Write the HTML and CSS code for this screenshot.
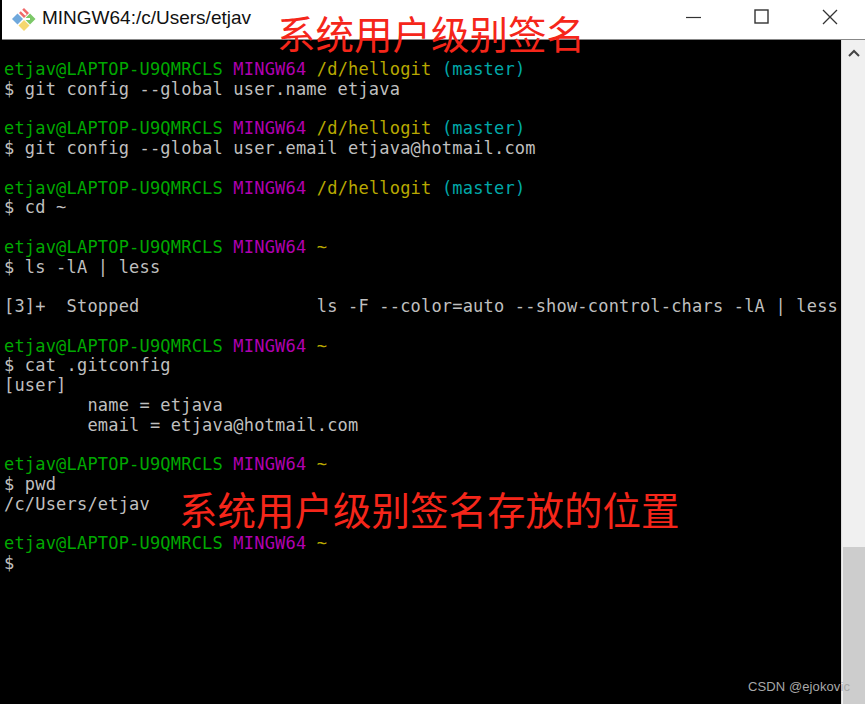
FILE: index.html
```html
<!DOCTYPE html>
<html lang="zh">
<head>
<meta charset="utf-8">
<title>MINGW64</title>
<link rel="stylesheet" href="styles.css">
</head>
<body>
<div class="window">
  <header class="titlebar">
    <svg class="logo" width="26" height="26" viewBox="0 0 26 26">
      <path d="M13 2 L8 7 L13 12 L18 7Z" fill="#f0696a"/>
      <path d="M1 13 L6.5 7.5 L12 13 L6.5 18.5Z" fill="#6fa8dc"/>
      <path d="M13.5 13 L19 7.5 L24.5 13 L19 18.5Z" fill="#7cc868"/>
      <path d="M13 14 L7.5 19.5 L13 25 L18.5 19.5Z" fill="#f5d76e"/>
      <path d="M10 4 L15 9 M13 13 L19 13" stroke="#fff" stroke-width="2" fill="none"/>
    </svg>
    <span class="title">MINGW64:/c/Users/etjav</span>
    <div class="controls">
      <svg width="16" height="16" viewBox="0 0 16 16"><path d="M0 8.5H15" stroke="#333" stroke-width="1.2"/></svg>
      <svg width="16" height="16" viewBox="0 0 16 16"><rect x="1" y="1" width="13" height="13" fill="none" stroke="#333" stroke-width="1.4"/></svg>
      <svg width="16" height="16" viewBox="0 0 16 16"><path d="M1 1L15 15M15 1L1 15" stroke="#333" stroke-width="1.3"/></svg>
    </div>
  </header>
  <div class="body">
    <pre class="terminal"><span class="g">etjav@LAPTOP-U9QMRCLS</span> <span class="m">MINGW64</span> <span class="y">/d/hellogit</span> <span class="c">(master)</span>
$ git config --global user.name etjava

<span class="g">etjav@LAPTOP-U9QMRCLS</span> <span class="m">MINGW64</span> <span class="y">/d/hellogit</span> <span class="c">(master)</span>
$ git config --global user.email etjava@hotmail.com

<span class="g">etjav@LAPTOP-U9QMRCLS</span> <span class="m">MINGW64</span> <span class="y">/d/hellogit</span> <span class="c">(master)</span>
$ cd ~

<span class="g">etjav@LAPTOP-U9QMRCLS</span> <span class="m">MINGW64</span> <span class="y">~</span>
$ ls -lA | less

[3]+  Stopped                 ls -F --color=auto --show-control-chars -lA | less

<span class="g">etjav@LAPTOP-U9QMRCLS</span> <span class="m">MINGW64</span> <span class="y">~</span>
$ cat .gitconfig
[user]
        name = etjava
        email = etjava@hotmail.com

<span class="g">etjav@LAPTOP-U9QMRCLS</span> <span class="m">MINGW64</span> <span class="y">~</span>
$ pwd
/c/Users/etjav

<span class="g">etjav@LAPTOP-U9QMRCLS</span> <span class="m">MINGW64</span> <span class="y">~</span>
$</pre>
    <aside class="scrollbar">
      <svg class="arrow" width="12" height="8" viewBox="0 0 12 8"><path d="M1 7L6 2L11 7" fill="none" stroke="#444" stroke-width="2"/></svg>
      <div class="thumb"></div>
    </aside>
  </div>
  <div class="note note-top">系统用户级别签名</div>
  <div class="note note-mid">系统用户级别签名存放的位置</div>
  <div class="mark">CSDN @ejokovic</div>
</div>
</body>
</html>
```
FILE: styles.css
```css
html, body {
  margin: 0;
  padding: 0;
  background: #000;
}
.window {
  position: relative;
  width: 865px;
  height: 704px;
  overflow: hidden;
  display: flex;
  flex-direction: column;
}
.titlebar {
  height: 39px;
  margin-left: 2px;
  background: #fff;
  border-bottom: 1px solid #888;
  display: flex;
  align-items: center;
  flex: none;
}
.logo {
  margin-left: 9px;
  margin-top: -2px;
}
.title {
  margin-left: 5px;
  margin-top: -3px;
  font: 19px "Liberation Sans", Arial, sans-serif;
  color: #111;
}
.controls {
  margin-left: auto;
  margin-right: 27px;
  margin-top: -5px;
  display: flex;
  gap: 52px;
}
.body {
  flex: 1;
  display: flex;
  min-height: 0;
}
.terminal {
  flex: 1;
  min-width: 0;
  margin: 0;
  padding: 20px 0 0 4px;
  background: #000;
  color: #bfbfbf;
  font-family: "DejaVu Sans Mono", monospace;
  font-size: 17px;
  line-height: 19.75px;
  letter-spacing: 0.19px;
  overflow: hidden;
}
.g { color: #00a800; }
.m { color: #b000b0; }
.y { color: #b8a800; }
.c { color: #00a8a8; }
.scrollbar {
  width: 24px;
  flex: none;
  margin-left: 1px;
  background: #f0f0f0;
  display: flex;
  flex-direction: column;
  align-items: center;
  box-sizing: border-box;
  border-left: 1px solid #ddd;
}
.arrow {
  margin-top: 9px;
}
.thumb {
  margin-top: auto;
  height: 157px;
  width: 22px;
  background: #cdcdcd;
}
.note {
  position: absolute;
  color: #f5261a;
  font-family: "Noto Sans CJK SC", sans-serif;
  white-space: nowrap;
  line-height: 1;
}
.note-top {
  left: 277px;
  top: 13px;
  font-size: 38.5px;
}
.note-mid {
  left: 179px;
  top: 489px;
  font-size: 38.5px;
}
.mark {
  position: absolute;
  left: 748px;
  top: 679px;
  font: 13px "Liberation Sans", Arial, sans-serif;
  letter-spacing: 0.1px;
  color: #a8a8a8;
  white-space: nowrap;
}
```
